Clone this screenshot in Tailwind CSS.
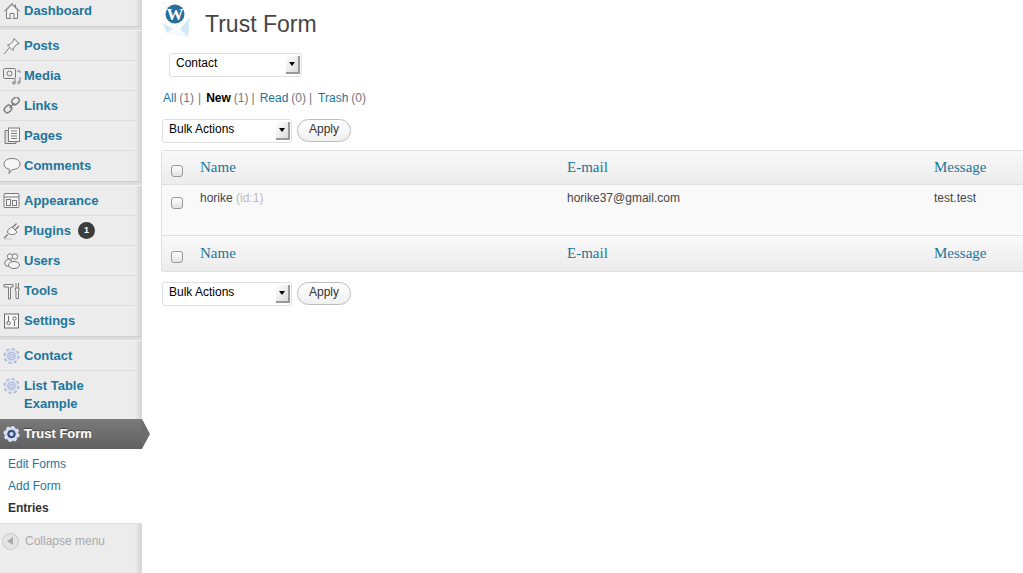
<!DOCTYPE html>
<html lang="en">

<head>
    <meta charset="UTF-8">
    <meta name="viewport" content="width=device-width, initial-scale=1.0">
    <title>Trust Form</title>
    <script src="https://cdn.jsdelivr.net/npm/@tailwindcss/browser@4"></script>
</head>

<body class="bg-white overflow-hidden font-['Liberation_Sans',Arial,sans-serif]">
    <div class="flex h-[573px] w-[1023px] overflow-hidden">

        <!-- Sidebar -->
        <aside class="relative w-[142px] shrink-0 h-full bg-[#ececec] border-r border-[#d8d8d8] text-[13px] font-bold text-[#21759b]">
            <div class="absolute top-0 bottom-0 right-0 w-[6px] bg-gradient-to-r from-[#ececec] to-[#d4d4d4]"></div>

            <a class="relative flex items-center h-[26px] pb-[5px] gap-[3px] pl-[3px]">
                <svg class="w-[18px] h-[18px] shrink-0" viewBox="0 0 18 18" fill="#f4f4f4" stroke="#7b7b7b" stroke-width="1"><path d="M3.500 8v8.500h11V8L9 2.500Z"/><path d="M1 9.500 9 1.500l8 8M12.500 2.500v3" fill="none"/><path d="M7 16.500v-5h4v5"/></svg>
                <span>Dashboard</span>
            </a>
            <div class="relative h-[5px] bg-[#dcdcdc] border-y border-[#cfcfcf] border-b-[#f5f5f5]"></div>

            <a class="relative flex items-center h-[30px] gap-[3px] pl-[3px] border-b border-[#dedede]">
                <svg class="w-[18px] h-[18px] shrink-0" viewBox="0 0 18 18" fill="#f4f4f4" stroke="#7b7b7b" stroke-width="1"><path d="M11 1.500 16 6.500 13.500 7.500 10.500 11 10 13.500 4.500 8 7 7.500 10 4.500Z"/><path d="M6.500 10.500 1 17" fill="none"/></svg>
                <span>Posts</span>
            </a>
            <a class="relative flex items-center h-[30px] gap-[3px] pl-[3px] border-b border-[#dedede]">
                <svg class="w-[18px] h-[18px] shrink-0" viewBox="0 0 18 18" fill="none" stroke="#7b7b7b" stroke-width="1"><rect x="0.500" y="1.500" width="12" height="10" rx="1"/><circle cx="6.500" cy="6.500" r="2.500"/><path d="M14 4h3v2M12 12v4M17 10v5"/><circle cx="10.800" cy="16" r="1.200"/><circle cx="15.800" cy="15.500" r="1.200"/></svg>
                <span>Media</span>
            </a>
            <a class="relative flex items-center h-[30px] gap-[3px] pl-[3px] border-b border-[#dedede]">
                <svg class="w-[18px] h-[18px] shrink-0" viewBox="0 0 18 18" fill="none" stroke="#7b7b7b" stroke-width="1.400"><rect x="8.500" y="1" width="8" height="6" rx="3" transform="rotate(-45 12.500 4)"/><rect x="1" y="9" width="8" height="6" rx="3" transform="rotate(-45 5 12)"/><path d="M6.500 11 11.500 6"/></svg>
                <span>Links</span>
            </a>
            <a class="relative flex items-center h-[30px] gap-[3px] pl-[3px] border-b border-[#dedede]">
                <svg class="w-[18px] h-[18px] shrink-0" viewBox="0 0 18 18" fill="none" stroke="#7b7b7b" stroke-width="1"><path d="M5.500 3.500H2v13h11v-2" fill="#dcdcdc"/><rect x="5.500" y="1" width="11" height="13.500" fill="#f7f7f7"/><path d="M8 4h6M8 6.500h6M8 9h6M8 11.500h6"/></svg>
                <span>Pages</span>
            </a>
            <a class="relative flex items-center h-[30px] gap-[3px] pl-[3px]">
                <svg class="w-[18px] h-[18px] shrink-0" viewBox="0 0 18 18" fill="#f7f7f7" stroke="#7b7b7b" stroke-width="1"><path d="M9 1.500c4.500 0 8 2 8 5.500s-3.500 5.500-8 5.500l-3 4 .500-4.300C3 11.500 1 10 1 7 1 3.500 4.500 1.500 9 1.500Z"/></svg>
                <span>Comments</span>
            </a>
            <div class="relative h-[5px] bg-[#dcdcdc] border-y border-[#cfcfcf] border-b-[#f5f5f5]"></div>

            <a class="relative flex items-center h-[30px] gap-[3px] pl-[3px] border-b border-[#dedede]">
                <svg class="w-[18px] h-[18px] shrink-0" viewBox="0 0 18 18" fill="#f4f4f4" stroke="#7b7b7b" stroke-width="1"><rect x="1" y="1.500" width="15" height="14" rx="1"/><path d="M1 5h15"/><rect x="3.500" y="7.500" width="4" height="6"/><rect x="9.500" y="8.500" width="4" height="5"/></svg>
                <span>Appearance</span>
            </a>
            <a class="relative flex items-center h-[30px] gap-[3px] pl-[3px] border-b border-[#dedede]">
                <svg class="w-[18px] h-[18px] shrink-0" viewBox="0 0 18 18" fill="#f4f4f4" stroke="#7b7b7b" stroke-width="1"><path d="M9 5 14 10c-1.500 2-3.500 3-5.500 2.500S4.500 12 4.500 10 6.500 6 9 5Z"/><path d="M4.500 12.500 1 16.500M9.500 5.500 13.500 1.500M12 8l4-4" fill="none" stroke-width="1.300"/><path d="M1 17h8" stroke="#ccc" fill="none"/></svg>
                <span>Plugins</span>
                <span class="flex items-center justify-center w-[17px] h-[17px] ml-[4px] rounded-full bg-[#3c3c3c] text-white text-[9px]">1</span>
            </a>
            <a class="relative flex items-center h-[30px] gap-[3px] pl-[3px] border-b border-[#dedede]">
                <svg class="w-[18px] h-[18px] shrink-0" viewBox="0 0 18 18" fill="#f4f4f4" stroke="#7b7b7b" stroke-width="1"><circle cx="7" cy="4.500" r="2.700"/><circle cx="12" cy="4.500" r="2.700"/><ellipse cx="5.500" cy="11" rx="3.800" ry="3.500"/><ellipse cx="11" cy="13" rx="5.500" ry="3.500"/></svg>
                <span>Users</span>
            </a>
            <a class="relative flex items-center h-[30px] gap-[3px] pl-[3px] border-b border-[#dedede]">
                <svg class="w-[18px] h-[18px] shrink-0" viewBox="0 0 18 18" fill="#f4f4f4" stroke="#7b7b7b" stroke-width="1"><path d="M1 2.500h9v2.500H7.500v12h-2V5H1Z"/><path d="M13 1v5M15.500 1v5"/><path d="M12.500 6h3.500v2l-.500 1v7.500h-2.500V9l-.500-1Z"/></svg>
                <span>Tools</span>
            </a>
            <a class="relative flex items-center h-[30px] gap-[3px] pl-[3px]">
                <svg class="w-[18px] h-[18px] shrink-0" viewBox="0 0 18 18" fill="#f7f7f7" stroke="#6b6b6b" stroke-width="1"><rect x="1.500" y="2" width="14" height="14"/><path d="M5.500 4v5M11.500 9v5"/><circle cx="5.500" cy="11" r="1.700"/><circle cx="11.500" cy="6.500" r="1.700"/></svg>
                <span>Settings</span>
            </a>
            <div class="relative h-[5px] bg-[#dcdcdc] border-y border-[#cfcfcf] border-b-[#f5f5f5]"></div>

            <a class="relative flex items-center h-[30px] gap-[3px] pl-[3px] border-b border-[#dedede]">
                <svg class="w-[18px] h-[18px] shrink-0" viewBox="0 0 18 18" fill="none"><circle cx="8.500" cy="9" r="7" fill="#dde2f0"/><circle cx="8.500" cy="9" r="7.200" stroke="#a9b3d2" stroke-width="1.600" stroke-dasharray="3 2.650"/><circle cx="8.500" cy="9" r="3.800" stroke="#a9b3d2"/><circle cx="8.500" cy="9" r="1.800" stroke="#a9b3d2"/></svg>
                <span>Contact</span>
            </a>
            <a class="relative flex h-[48px] gap-[3px] pl-[3px] pt-[6px] leading-[18px]">
                <svg class="w-[18px] h-[18px] shrink-0" viewBox="0 0 18 18" fill="none"><circle cx="8.500" cy="9" r="7" fill="#dde2f0"/><circle cx="8.500" cy="9" r="7.200" stroke="#a9b3d2" stroke-width="1.600" stroke-dasharray="3 2.650"/><circle cx="8.500" cy="9" r="3.800" stroke="#a9b3d2"/><circle cx="8.500" cy="9" r="1.800" stroke="#a9b3d2"/></svg>
                <span>List Table<br>Example</span>
            </a>

            <!-- Current menu item -->
            <a class="relative flex items-center h-[30px] w-[142px] gap-[3px] pl-[3px] bg-gradient-to-b from-[#7a7a7a] to-[#606060] text-white [text-shadow:0_-1px_0_#444]">
                <svg class="w-[18px] h-[18px] shrink-0" viewBox="0 0 18 18" fill="none"><circle cx="8.500" cy="9" r="7" fill="#d5dcf2"/><circle cx="8.500" cy="9" r="7.200" stroke="#e6eafa" stroke-width="1.600" stroke-dasharray="3 2.650"/><circle cx="8.500" cy="9" r="3.800" fill="#34507f" stroke="#34507f"/><circle cx="8.500" cy="9" r="2" fill="#d5dcf2"/></svg>
                <span>Trust Form</span>
                <span class="absolute left-[142px] top-0 w-0 h-0 border-y-[15px] border-y-transparent border-l-[8px] border-l-[#6c6c6c]"></span>
            </a>
            <div class="relative w-[142px] h-[75px] bg-white border-b border-[#dedede] pl-[8px] pt-[4px] text-[12px] font-normal leading-[22px]">
                <div>Edit Forms</div>
                <div>Add Form</div>
                <div class="font-bold text-[#333]">Entries</div>
            </div>
            <div class="relative flex items-center h-[34px] gap-[6px] pl-[2px] text-[12px] font-normal text-[#aaa]">
                <span class="flex items-center justify-center w-[17px] h-[17px] rounded-full bg-[#e4e4e4] border border-[#c8c8c8]">
                    <span class="w-0 h-0 border-y-[4px] border-y-transparent border-r-[6px] border-r-[#aaa] -ml-[1px]"></span>
                </span>
                <span>Collapse menu</span>
            </div>
        </aside>

        <!-- Main -->
        <main class="flex-1 min-w-0 pl-[20px] text-[12px] text-[#464646]">
            <div class="flex items-start h-[53px] pt-[6px]">
                <svg class="w-[30px] h-[34px] shrink-0 -ml-[2px] -mt-[3px]" viewBox="0 0 30 34">
                    <circle cx="15" cy="11" r="9.500" fill="#2a6f9c"/>
                    <text x="15" y="17" text-anchor="middle" font-family="Liberation Serif" font-size="17" font-weight="bold" fill="#fff">W</text>
                    <path d="M2 19 7 30 28 34 30 13 18 27Z" fill="#d4e9f7"/>
                    <path d="M7 30 17 22 28 34Z" fill="#f4fafe"/>
                    <path d="M2 19 18 27 30 13" fill="none" stroke="#ffffff" stroke-width="1.500"/>
                </svg>
                <h1 class="ml-[15px] text-[23px] leading-[36px] text-[#464646] font-['Liberation_Sans',Arial,sans-serif]">Trust Form</h1>
            </div>

            <div class="ml-[7px] flex items-center justify-between w-[133px] h-[24px] pl-[6px] pr-[1px] bg-white border border-[#dfdfdf] rounded-[3px] text-black">
                <span class="-mt-[5px]">Contact</span>
                <span class="flex items-center justify-center w-[14px] h-[18px] bg-gradient-to-br from-white to-[#dcdcdc] border-r-2 border-b-2 border-[#999]">
                    <span class="w-0 h-0 border-x-[3.500px] border-x-transparent border-t-[4px] border-t-black"></span>
                </span>
            </div>

            <div class="flex items-center h-[18px] mt-[12px] ml-[1px] text-[#777] whitespace-nowrap">
                <span class="text-[#21759b]">All</span><span class="ml-[3px]">(1)</span><span class="ml-[4px] mr-[5px]">|</span>
                <span class="font-bold text-black">New</span><span class="ml-[3px]">(1)</span><span class="ml-[3px] mr-[5px]">|</span>
                <span class="text-[#21759b]">Read</span><span class="ml-[3px]">(0)</span><span class="ml-[3px] mr-[6px]">|</span>
                <span class="text-[#21759b]">Trash</span><span class="ml-[3px]">(0)</span>
            </div>

            <!-- Top actions -->
            <div class="flex items-center gap-[5px] mt-[12px] h-[24px]">
                <div class="flex items-center justify-between w-[130px] h-[24px] pl-[6px] pr-[1px] bg-white border border-[#dfdfdf] rounded-[3px] text-black">
                    <span class="-mt-[5px]">Bulk Actions</span>
                    <span class="flex items-center justify-center w-[14px] h-[18px] bg-gradient-to-br from-white to-[#dcdcdc] border-r-2 border-b-2 border-[#999]">
                        <span class="w-0 h-0 border-x-[3.500px] border-x-transparent border-t-[4px] border-t-black"></span>
                    </span>
                </div>
                <button class="w-[54px] h-[23px] -mt-[2px] pb-[2px] rounded-full border border-[#bbb] bg-gradient-to-b from-white to-[#f0f0f0] text-[#333] text-[12px]">Apply</button>
            </div>

            <!-- Table -->
            <div class="mt-[7px] -ml-[1px] border-y border-l border-[#dfdfdf] rounded-l-[3px] bg-[#f9f9f9] w-[862px]">
                <div class="grid grid-cols-[38px_367px_367px_1fr] items-center h-[34px] border-b border-[#dfdfdf] bg-gradient-to-b from-[#f9f9f9] to-[#ececec] font-['Liberation_Serif',serif] text-[15px] text-[#21759b]">
                    <span class="w-[12px] h-[12px] ml-[9px] mt-[6px] rounded-[3px] border border-[#999] bg-gradient-to-b from-white to-[#e2e2e2]"></span>
                    <span>Name</span><span>E-mail</span><span>Message</span>
                </div>
                <div class="grid grid-cols-[38px_367px_367px_1fr] items-start h-[51px] pt-[6px] leading-[14px] border-b border-[#dfdfdf]">
                    <span class="w-[12px] h-[12px] ml-[9px] mt-[6px] rounded-[3px] border border-[#999] bg-gradient-to-b from-white to-[#e2e2e2]"></span>
                    <span>horike <span class="text-[#bbb]">(id:1)</span></span><span>horike37@gmail.com</span><span>test.test</span>
                </div>
                <div class="grid grid-cols-[38px_367px_367px_1fr] items-center h-[35px] bg-gradient-to-b from-[#f9f9f9] to-[#ececec] font-['Liberation_Serif',serif] text-[15px] text-[#21759b]">
                    <span class="w-[12px] h-[12px] ml-[9px] mt-[6px] rounded-[3px] border border-[#999] bg-gradient-to-b from-white to-[#e2e2e2]"></span>
                    <span>Name</span><span>E-mail</span><span>Message</span>
                </div>
            </div>

            <!-- Bottom actions -->
            <div class="flex items-center gap-[5px] mt-[10px] h-[24px]">
                <div class="flex items-center justify-between w-[130px] h-[24px] pl-[6px] pr-[1px] bg-white border border-[#dfdfdf] rounded-[3px] text-black">
                    <span class="-mt-[5px]">Bulk Actions</span>
                    <span class="flex items-center justify-center w-[14px] h-[18px] bg-gradient-to-br from-white to-[#dcdcdc] border-r-2 border-b-2 border-[#999]">
                        <span class="w-0 h-0 border-x-[3.500px] border-x-transparent border-t-[4px] border-t-black"></span>
                    </span>
                </div>
                <button class="w-[54px] h-[23px] -mt-[2px] pb-[2px] rounded-full border border-[#bbb] bg-gradient-to-b from-white to-[#f0f0f0] text-[#333] text-[12px]">Apply</button>
            </div>
        </main>
    </div>
</body>

</html>
